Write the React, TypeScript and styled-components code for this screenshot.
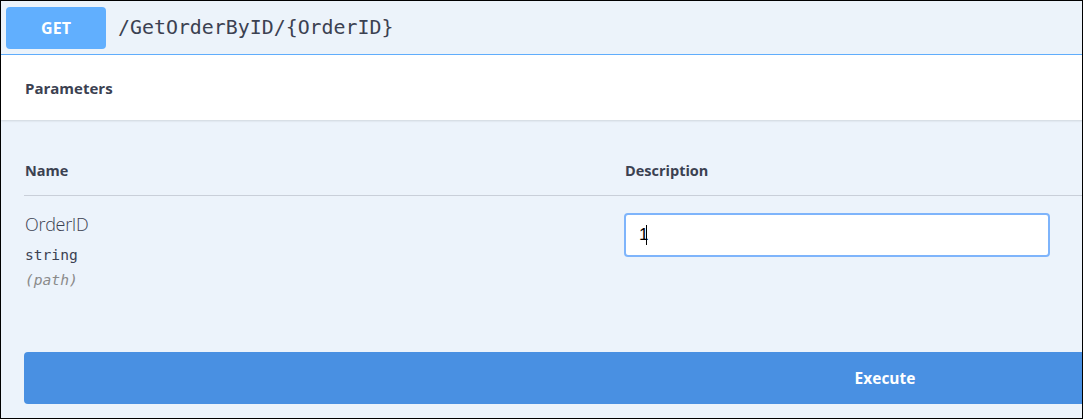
import React from "react";
import styled, { createGlobalStyle } from "styled-components";

const Global = createGlobalStyle`
  html, body { margin: 0; padding: 0; background: #ffffff; }
  * { box-sizing: border-box; }
`;

const Frame = styled.div`
  width: 1083px;
  height: 419px;
  border: 1px solid #000;
  overflow: hidden;
  background: #ecf3fb;
  font-family: "Open Sans", "Noto Sans", sans-serif;
  color: #3b4151;
`;

const Block = styled.div`
  width: 1800px;
`;

const Summary = styled.div`
  height: 54px;
  display: flex;
  align-items: center;
  padding-left: 5px;
  background: #ecf3fa;
  border-bottom: 1px solid #61affe;
`;

const Method = styled.div`
  width: 100px;
  height: 42px;
  border-radius: 4px;
  background: #61affe;
  color: #fff;
  font-weight: 700;
  font-size: 16px;
  display: flex;
  align-items: center;
  justify-content: center;
`;

const Path = styled.div`
  margin-left: 12px;
  font-family: "DejaVu Sans Mono", "Liberation Mono", monospace;
  font-size: 19.9px;
  font-weight: 500;
  color: #3b4151;
`;

const SectionHeader = styled.div`
  height: 65px;
  background: #fff;
  display: flex;
  align-items: center;
  padding-left: 24px;
  box-shadow: 0 1px 2px rgba(0, 0, 0, 0.12);
  position: relative;
`;

const H4 = styled.div`
  font-size: 15px;
  font-weight: 700;
`;

const Table = styled.div`
  padding: 0 0 0 23px;
`;

const HeadRow = styled.div`
  display: grid;
  grid-template-columns: 600px 1fr;
  height: 76px;
  padding-top: 42px;
  border-bottom: 1px solid #c9cfd9;
`;

const HeadCell = styled.div`
  padding-left: 1px;
  font-size: 14.5px;
  font-weight: 700;
  line-height: 18px;
`;

const BodyRow = styled.div`
  display: grid;
  grid-template-columns: 600px 1fr;
  height: 156px;
  padding-top: 17px;
`;

const NameCell = styled.div`
  padding-left: 1px;
`;

const ParamName = styled.div`
  font-size: 18px;
  font-weight: 300;
  line-height: 23px;
  letter-spacing: -0.3px;
`;

const ParamType = styled.div`
  margin-top: 10px;
  font-family: "DejaVu Sans Mono", "Liberation Mono", monospace;
  font-size: 14.6px;
  font-weight: 400;
  line-height: 18px;
`;

const ParamIn = styled.div`
  margin-top: 7px;
  font-family: "DejaVu Sans Mono", "Liberation Mono", monospace;
  font-size: 14.6px;
  font-style: italic;
  color: #8a8a8a;
  line-height: 18px;
`;

const InputWrap = styled.div`
  position: relative;
  width: 426px;
  height: 44px;
`;

const Input = styled.input`
  width: 426px;
  height: 44px;
  border: 2px solid #7eb4fb;
  border-radius: 4px;
  background: #fff;
  padding: 0 0 0 13px;
  font-family: "Liberation Sans", Arial, sans-serif;
  font-size: 17px;
  color: #000;
  outline: none;
`;

const Caret = styled.span`
  position: absolute;
  left: 22px;
  top: 12px;
  width: 1px;
  height: 20px;
  background: #000;
`;

const ExecuteRow = styled.div`
  padding: 0 0 0 23px;
`;

const Execute = styled.button`
  width: 1722px;
  height: 52px;
  border: none;
  border-radius: 4px;
  background: #4990e2;
  color: #fff;
  font-family: "Open Sans", "Noto Sans", sans-serif;
  font-size: 15.5px;
  font-weight: 700;
  display: flex;
  align-items: center;
  justify-content: center;
  padding: 0;
  cursor: pointer;
`;

export default function App() {
  return (
    <>
      <Global />
      <Frame>
        <Block>
          <Summary>
            <Method>GET</Method>
            <Path>/GetOrderByID/{"{OrderID}"}</Path>
          </Summary>
          <SectionHeader>
            <H4>Parameters</H4>
          </SectionHeader>
          <Table>
            <HeadRow>
              <HeadCell>Name</HeadCell>
              <HeadCell>Description</HeadCell>
            </HeadRow>
            <BodyRow>
              <NameCell>
                <ParamName>OrderID</ParamName>
                <ParamType>string</ParamType>
                <ParamIn>(path)</ParamIn>
              </NameCell>
              <div>
                <InputWrap>
                  <Input defaultValue="1" readOnly />
                  <Caret />
                </InputWrap>
              </div>
            </BodyRow>
          </Table>
          <ExecuteRow>
            <Execute>Execute</Execute>
          </ExecuteRow>
        </Block>
      </Frame>
    </>
  );
}
